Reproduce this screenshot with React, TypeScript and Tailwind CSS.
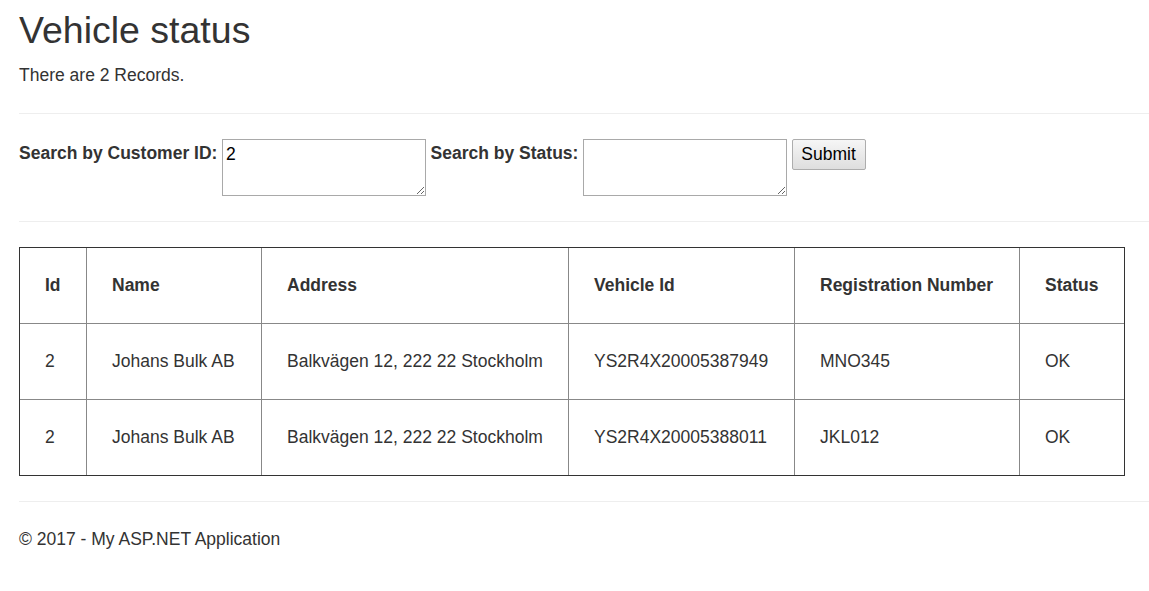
import React from 'react'

// ── Data ──────────────────────────────────────────────────────────────────────

interface VehicleRow {
  id: number
  name: string
  address: string
  vehicleId: string
  regNumber: string
  status: string
}

const rows: VehicleRow[] = [
  {
    id: 2,
    name: 'Johans Bulk AB',
    address: 'Balkvägen 12, 222 22 Stockholm',
    vehicleId: 'YS2R4X20005387949',
    regNumber: 'MNO345',
    status: 'OK',
  },
  {
    id: 2,
    name: 'Johans Bulk AB',
    address: 'Balkvägen 12, 222 22 Stockholm',
    vehicleId: 'YS2R4X20005388011',
    regNumber: 'JKL012',
    status: 'OK',
  },
]

const columns = ['Id', 'Name', 'Address', 'Vehicle Id', 'Registration Number', 'Status']
const colWidths = ['w-[66px]', 'w-[175px]', 'w-[307px]', 'w-[226px]', 'w-[225px]', 'w-[105px]']

// ── Component ─────────────────────────────────────────────────────────────────

export default function App() {
  const cell = (i: number, r: number) =>
    `px-[25px] py-[25px] text-left align-top leading-[25px] border-[#888] ${
      i > 0 ? 'border-l' : ''
    } ${r > 0 ? 'border-t' : ''}`

  return (
    <div className="min-h-[591px] bg-white pl-[19px] pt-[10px] text-[17.5px] leading-[25px] text-[#333] font-['Liberation_Sans',Arial,sans-serif]">
      {/* Header */}
      <h2 className="text-[37.5px] leading-[41.25px] font-normal">Vehicle status</h2>
      <p className="mt-[12px]">There are 2 Records.</p>

      <hr className="mt-[25px] mb-[25px] border-t border-[#eee]" />

      {/* Search form */}
      <form className="flex items-start gap-[4.6px]" onSubmit={e => e.preventDefault()}>
        <label className="mt-[2px] font-bold">Search by Customer ID:</label>
        <textarea
          defaultValue="2"
          className="w-[204px] h-[57px] border border-[#a9a9a9] bg-white px-[3px] py-[2px] text-black leading-[25px]"
        />
        <label className="mt-[2px] font-bold">Search by Status:</label>
        <textarea className="w-[204px] h-[57px] border border-[#a9a9a9] bg-white px-[3px] py-[2px] text-black leading-[25px]" />
        <button
          type="submit"
          className="h-[31px] w-[74px] rounded-[2px] border border-[#adadad] bg-gradient-to-b from-[#f6f6f6] to-[#dedede] text-black leading-[25px]"
        >
          Submit
        </button>
      </form>

      <hr className="mt-[25px] mb-[25px] border-t border-[#eee]" />

      {/* Table */}
      <table className="w-[1106px] table-fixed border-separate border-spacing-0 border border-[#333]">
        <colgroup>
          {colWidths.map((w, i) => (
            <col key={i} className={w} />
          ))}
        </colgroup>
        <thead>
          <tr>
            {columns.map((c, i) => (
              <th key={c} className={`${cell(i, 0)} font-bold`}>
                {c}
              </th>
            ))}
          </tr>
        </thead>
        <tbody>
          {rows.map((row, r) => {
            const values = [row.id, row.name, row.address, row.vehicleId, row.regNumber, row.status]
            return (
              <tr key={row.vehicleId}>
                {values.map((v, i) => (
                  <td key={i} className={`${cell(i, r + 1)} font-normal`}>
                    {v}
                  </td>
                ))}
              </tr>
            )
          })}
        </tbody>
      </table>

      <hr className="mt-[25px] mb-[25px] border-t border-[#eee]" />

      {/* Footer */}
      <footer>
        <p>© 2017 - My ASP.NET Application</p>
      </footer>
    </div>
  )
}
